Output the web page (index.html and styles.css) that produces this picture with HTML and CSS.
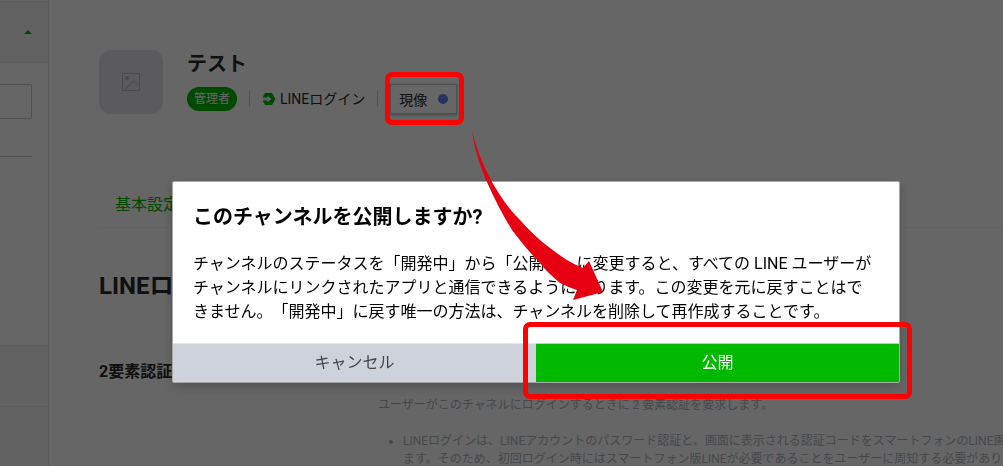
FILE: index.html
```html
<!DOCTYPE html>
<html lang="ja">
<head>
    <meta charset="UTF-8">
    <meta name="viewport" content="width=device-width, initial-scale=1.0">
    <title>テスト</title>
    <link rel="stylesheet" href="styles.css">
</head>
<body>
    <div class="app">
        <aside class="sidebar">
            <div class="side-head"><span class="caret"></span></div>
            <div class="side-search">
                <input class="side-input" type="text" aria-label="検索">
            </div>
            <div class="side-item"></div>
            <div class="side-item"></div>
        </aside>

        <main class="main">
            <header class="channel">
                <div class="avatar">
                    <svg width="20" height="20" viewBox="0 0 20 20" fill="none" stroke="#b9b9bd">
                        <rect x="1.5" y="1.5" width="17" height="17"/>
                        <circle cx="6" cy="6" r="2" fill="#b9b9bd" stroke="none"/>
                        <path d="M3 18.500 13 8.500l5.500 5.500"/>
                    </svg>
                </div>
                <div class="channel-info">
                    <h1>テスト</h1>
                    <div class="meta">
                        <span class="badge">管理者</span>
                        <span class="divider"></span>
                        <span class="type">
                            <svg width="14" height="12" viewBox="0 0 14 12">
                                <path d="M3 0h7l3.500 6L10 12H3L1 8.500V3.500z" fill="#00b900"/>
                                <path d="M0 4.500h5.500V3L9.500 6l-4 3V7.500H0z" fill="#fff"/>
                                <path d="M1 5.500h5.500v1H1z" fill="#00b900" opacity="0.3"/>
                            </svg>
                            LINEログイン
                        </span>
                        <span class="divider"></span>
                        <button class="status" type="button">現像<span class="dot"></span></button>
                    </div>
                </div>
            </header>

            <nav class="tabs">
                <a href="#basic">基本設定</a>
            </nav>

            <section id="basic">
                <h2>LINEロ</h2>
                <div class="setting">
                    <h3>2要素認証</h3>
                    <div class="setting-body">
                        <p>ユーザーがこのチャネルにログインするときに 2 要素認証を要求します。</p>
                        <ul>
                            <li>LINEログインは、LINEアカウントのパスワード認証と、画面に表示される認証コードをスマートフォンのLINE画<br>ます。そのため、初回ログイン時にはスマートフォン版LINEが必要であることをユーザーに周知する必要があり</li>
                        </ul>
                    </div>
                </div>
            </section>
        </main>
    </div>

    <div class="overlay">
        <div class="modal" role="dialog" aria-labelledby="modal-title">
            <div class="modal-body">
                <h2 id="modal-title">このチャンネルを公開しますか?</h2>
                <p>チャンネルのステータスを「開発中」から「公開中」に変更すると、すべての LINE ユーザーがチャンネルにリンクされたアプリと通信できるようになります。この変更を元に戻すことはできません。「開発中」に戻す唯一の方法は、チャンネルを削除して再作成することです。</p>
            </div>
            <div class="modal-actions">
                <button class="cancel" type="button">キャンセル</button>
                <button class="publish" type="button">公開</button>
            </div>
        </div>
    </div>

    <!-- red markers on top of everything -->
    <div class="mark-status"></div>
    <svg class="arrow" width="140" height="180" viewBox="0 0 140 180">
        <path d="M2 0C6 18 13 35 22 52c8 14 17 27 28 38 9 10 19 20 30 28 10 8 21 15 33 20l6-7 14 31-30 8 4-10c-6-2-11-4-17-7-7-6-14-12-20-20-10-10-19-21-28-33C32 84 24 68 17 52 10 36 4 18 2 0z" fill="#e60012"/>
    </svg>
</body>
</html>
```

FILE: styles.css
```css
* {
    box-sizing: border-box;
}
body {
    margin: 0;
    font-family: Roboto, "Noto Sans CJK JP", sans-serif;
    text-spacing-trim: space-all;
    color: #2a2a2a;
    background: #fff;
    overflow: hidden;
}
h1, h2, h3, p, ul {
    margin: 0;
}
button {
    font-family: inherit;
    cursor: pointer;
}
.app {
    display: flex;
    height: 100vh;
}

/* sidebar */
.sidebar {
    flex: 0 0 49px;
    padding-top: 1px;
    border-right: 1px solid #dfe3e8;
}
.side-head {
    height: 62px;
    display: flex;
    align-items: center;
    justify-content: flex-end;
    padding-right: 16px;
    background: #f5f5f5;
    border-top: 1px solid #e3e5e8;
    border-bottom: 1px solid #e3e5e8;
}
.caret {
    border: 4px solid transparent;
    border-top: 0;
    border-bottom-color: #00b900;
}
.side-search {
    height: 94px;
    margin: 0 16px 188px 0;
    padding-top: 21px;
    border-bottom: 1px solid #c8c8c8;
}
.side-input {
    display: block;
    width: 100%;
    height: 35px;
    border: 1px solid #c8c8c8;
    border-left: 0;
    border-radius: 0 2px 2px 0;
    background: #fff;
}
.side-item {
    height: 61px;
    background: #f5f5f5;
    border-top: 1px solid #e3e5e8;
}

/* channel page */
.main {
    flex: 1;
    min-width: 0;
    padding: 50px 0 0 50px;
    white-space: nowrap;
}
.channel {
    display: flex;
    gap: 24px;
}
.avatar {
    width: 64px;
    height: 64px;
    border-radius: 12px;
    background: #e3e3e8;
    display: flex;
    align-items: center;
    justify-content: center;
}
h1 {
    font-size: 20px;
    line-height: 28px;
}
.meta {
    display: flex;
    align-items: center;
    gap: 12px;
    margin-top: 6px;
    font-size: 14px;
    line-height: 20px;
}
.badge {
    padding: 0 7px;
    border-radius: 12px;
    background: #00b900;
    color: #fff;
    font-size: 12px;
    line-height: 24px;
}
.divider {
    width: 1px;
    height: 16px;
    background: #c8c8c8;
}
.type {
    display: flex;
    align-items: center;
    gap: 4px;
}
.status {
    display: flex;
    align-items: center;
    gap: 11px;
    height: 30px;
    padding: 0 8px;
    border: 1px solid #c8c8c8;
    background: #fff;
    box-shadow: 0 1px 3px rgba(0, 0, 0, 0.3);
    color: #2a2a2a;
    font-size: 14px;
}
.dot {
    width: 10px;
    height: 10px;
    border-radius: 50%;
    background: #5b82e6;
}
.tabs {
    margin-top: 79px;
    padding: 0 16px 10px;
    border-bottom: 1px solid #f5f5f5;
}
.tabs a {
    color: #00b900;
    font-size: 16px;
    line-height: 24px;
    text-decoration: none;
}
section h2 {
    margin-top: 40px;
    font-size: 24px;
    line-height: 36px;
}
.setting {
    display: flex;
    margin-top: 56px;
}
.setting h3 {
    flex: 0 0 279px;
    font-size: 16px;
    line-height: 24px;
}
.setting-body {
    padding-top: 36px;
    color: #afb4be;
    font-size: 12px;
    line-height: 18px;
}
.setting-body ul {
    margin-top: 18px;
    padding-left: 25px;
}

/* dialog */
.overlay {
    position: fixed;
    inset: 0;
    display: flex;
    align-items: flex-start;
    justify-content: center;
    padding: 181px 0 0 69px;
    background: rgba(0, 0, 0, 0.6);
}
.modal {
    width: 78%;
    max-width: 728px;
    border: 1px solid #a6a6a6;
    border-radius: 2px;
    background: #fff;
    color: #000;
    box-shadow: 0 4px 12px rgba(0, 0, 0, 0.2);
}
.modal-body {
    padding: 21px 24px 19px 20px;
}
.modal-body h2 {
    font-size: 20px;
    line-height: 28px;
}
.modal-body p {
    margin-top: 21px;
    font-size: 16px;
    line-height: 24px;
}
.modal-actions {
    display: flex;
}
.modal-actions button {
    flex: 1;
    height: 39px;
    padding: 0 0 4px;
    border: 0;
    border-top: 1px solid #e3e6ea;
    font-size: 16px;
}
.modal-actions .cancel {
    background: #ced3db;
    color: #444;
}
.modal-actions .publish {
    position: relative;
    border-top-color: #a6e3a6;
    background: #00b900;
    color: #fff;
}
.publish::after {
    content: "";
    position: absolute;
    inset: -22px -13px -17px;
    border: 5px solid #f00;
    border-radius: 7px;
}

/* markers */
.mark-status {
    position: absolute;
    left: 385px;
    top: 72px;
    width: 79px;
    height: 53px;
    border: 5px solid #f00;
    border-radius: 7px;
}
.arrow {
    position: absolute;
    left: 470px;
    top: 130px;
}
```
